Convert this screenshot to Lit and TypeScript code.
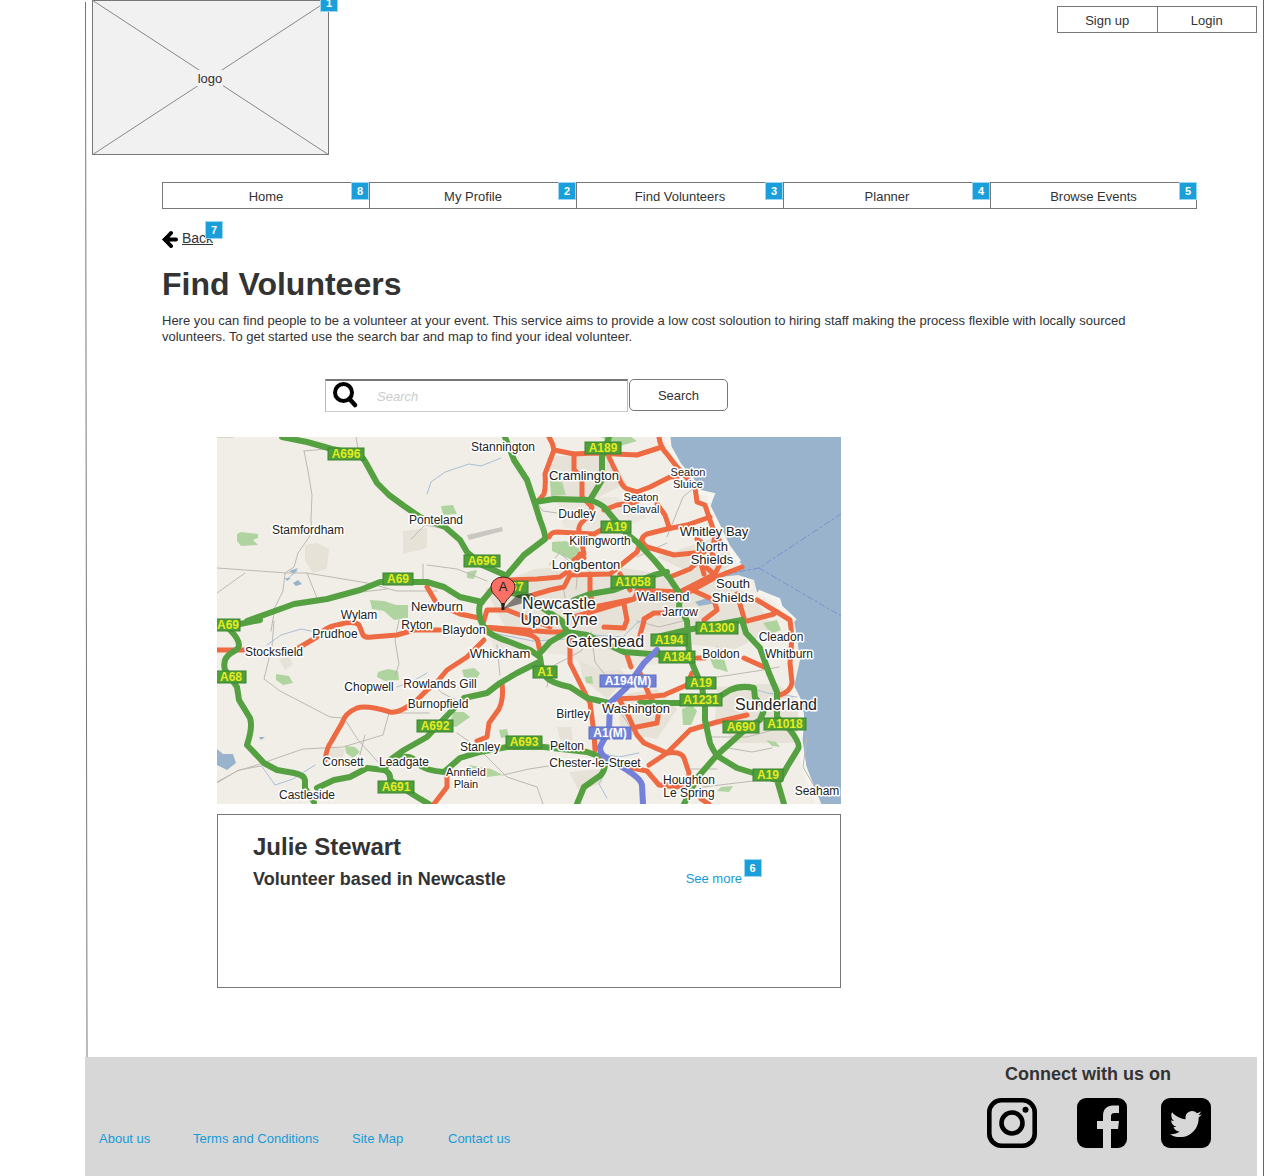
import { LitElement, html, svg, css } from "lit";
import { customElement, property } from "lit/decorators.js";

type Place = [name: string, x: number, y: number, size: "xs" | "s" | "m" | "l"];
type Shield = [code: string, x: number, y: number, width: number];

const LAND_PATCHES = [
  "M20 97l4-2 17 2v4l-5 2 5 5v0l-17 1-4-5z",
  "M153 163l14 1 12 4 12 0v13l-14 2-10-9-12-2z",
  "M59 237l13 2 4 7-10 2-7-5z",
  "M161 235l10-3 10 2 1 9-14 1-8-4z",
  "M128 309l10 1 5 5-7 6-7-5z",
  "M224 69l12-1 4 9-14 1z",
  "M333 44l12 1 4 13-15 1z",
  "M335 105l14-1 14 8-6 12-22-10z",
  "M384 0h30l6 4-20 6z",
  "M245 233l12-2 6 5-4 7-12-3z",
  "M237 275l10 0 6 5-14 10-8-2z",
  "M282 293l8-1 2 8-8 1z",
  "M252 328l22 4 12 6-16 2-16-5z",
  "M465 272l10-4 5 6-6 14-8 0z",
  "M493 222l14 0 4 13-14-4z",
  "M546 186l14-3 4 10-10 4z",
  "M549 303l10 2 4 5-8-1z",
  "M504 350l12-1-4 6-12-1z",
  "M368 240l7-1 1 8-7-1z",
  "M250 135l10-2-3 9-7-1z",
];

const BUILT_UP = [
  "M88 108l12-2 12 6-2 20-14 4-8-12z",
  "M186 94l24-3v20l-24 6z",
  "M114 310l14 2-4 16-14 2z",
  "M62 222l10-3 4 8-8 6z",
  "M268 152l50-20 60-6 60 10 60 0 40 26 20 30-40 20-60-6-90 8-70-4z",
  "M330 20l60-4 20 30-40 20-34-6z",
  "M440 120l60-20 20 24-30 20z",
  "M360 216l30 0 20 24-20 22-24-20z",
  "M400 258l40-6 20 20-20 30-36-6z",
  "M500 250l60-4 22 20-4 40-60 0-20-24z",
  "M352 335l30-3 4 14-24 8z",
  "M466 350l20-6 8 14-20 4z",
  "M340 290l14 0 2 14-12 2z",
];

const URBAN_LIGHT = [
  "M268 190l50 12 60 0 40-10 50 10-20 24-60 8-40-16-70-6z",
  "M340 60l60 0 30 20-40 18-44-8z",
];

const MINOR_ROADS = [
  "M139 0l2 12M87 14l22-2M87 14l4 20 4 24-1 24 1 14-14 20-4 14-9 6-2 18-8 16-4 24",
  "M0 131l70 5 20 0 60 10 30 8 40 0M0 156l28-20M90 136l10 25M120 158l50-6",
  "M0 0l16 0M57 184l-2 25-8 33 16 12 50 26 14 1 14 22 20 22M0 346l20-12 20-6 46-16 40-2 40-12 6-22 40 0M148 298l-5 20",
  "M210 128l30 4 30 12M228 92l-20-4-14 14M320 66l6 8 14 2M346 150l4 20",
  "M0 345l22-12 22-4M213 244l12 12 20 10M240 296l20 14 30 30 30 10 6 17M286 338l26-6 26-4",
  "M280 208l3 30M330 250l4-20 30-16 6-10M374 195l4 30 14 18M420 120l30-14M450 100l16-40 14-12",
  "M500 240l40-6 22-4M490 300l40 0 30-8 20 2M505 310l30 5 20-4M470 332l30 0M486 350l50-6M590 300l-4 30 14 24",
  "M400 270l20 30 20 14M420 184l22 6 24-6M500 210l20 10M345 118l16 14-2 20",
  "M332 128l12-14M182 183l-4 20 4 24-4 12M206 127l0 20",
];

const STREAMS = [
  "M50 208l14-10 20-6 20 4",
  "M276 196l40 8 34-2 26-4 30 2 14-14 20-10 30-4",
  "M70 142l10-8M180 250l16-6 14-8M382 316l20 4 20-4M388 335l-6 12 8 14M44 328l14 20 18-6 22-14",
  "M580 260l-30-4-20-6-16 4",
  "M210 57l4-12 14-10 24-8 12 2 20-8",
];

const RED_ROADS = [
  "M332 0Q336 6 337 13L328 37Q329 50 327 57L322 63",
  "M337 13l20 4 20-1 43 2M420 18l25-8",
  "M357 17v16l8 7v20l10 10-2 8Q360 88 362 93L367 117l-10 6",
  "M392 20l8 17Q405 50 410 52l10 3 13-5 20-10 7 0",
  "M387 73l13-5 20-3",
  "M332 100Q334 95 340 95l37 2 13-7 20-2",
  "M442 0Q443 10 450 17l10 13 18 20 2 15 8 3 5 15 5 14-3 20 8 10-5 10-35 18",
  "M493 80l-23 8-20 4-20 5Q420 102 430 110l27 8 30-3",
  "M440 67l8 11 4 12M480 102l14 10 8-8M500 100l8 12",
  "M425 102l-5 13-10 8-17 14-40 1",
  "M290 143l30-1 23-2 10-7 10-16 4 4",
  "M316 158l17-5 14-3 6-12",
  "M373 137v20l4 13M403 137l10 16",
  "M350 170l27 0 40-8 3-6M357 180l60-18M407 167l3 16-3 8-20-1",
  "M420 153l43 2 34-17M453 140l20-8 10-9 4 14M473 152l24 11 3 10-13 10",
  "M483 125l14 12M463 160l36-20 26-10",
  "M520 157l7 24M540 163l20 12 13 8 2 17-2 26 2 20Q573 255 563 258M557 177l-27 7",
  "M427 182l10-6 24 0M427 184l-4 14",
  "M0 213h27M78 213l22-13Q108 190 120 188Q137 183 142 188L146 198Q148 201 155 200L180 198l17-5 26 0",
  "M210 150l10 17 23 10 24 5M290 173l-20 0-5 17M290 173l23 9 20 8",
  "M267 190l36 6Q320 198 321 205l2 10M267 190l66 5 17 0",
  "M267 203l-17 17-20 13-10 12-10 8-10 10Q182 277 173 275Q150 268 140 271Q128 276 125 286L114 305Q110 310 108 323",
  "M285 246Q287 262 282 272L272 286l-2 14-10 4",
  "M353 196v30l10 20 10 20 4 30 1 17",
  "M230 336v14l-13 17",
  "M398 262l22-1 27-3 23-10 5-12M423 236l10 24 9 13-2 13-20 4",
  "M402 262l8 14 10 22 7 8 23 10 23-23 27-8 30-7",
  "M432 328l18-12Q464 314 467 321l5 15v14l-22-2M410 330l20 4 12 14 18 2M484 362l8 5",
  "M480 221l8 0M527 221l20 9M410 218l4 12",
];

const GREEN_ROADS = [
  "M65 0l25 5 25 7 25 5Q146 20 149 26L160 46l12 12 15 11 16 11 25 10 15 13 7 12 15 13 23 10",
  "M288 0l9 23 13 20 8 24 5 16Q329 98 328 102L307 118l-17 20-13 12-14 17Q260 180 268 192Q274 199 293 205l20 8 10 7Q325 236 329 240Q334 246 353 250l17 11 22 5",
  "M318 65l19-3 36 1Q382 66 387 70l10 12 13 15 10 8 17 18 16 19 10 15-1 13 8 14 2 32 3 10 10 24 3 20v13l5 23Q497 316 502 320L520 331l23 7 17 5 7 24",
  "M392 0l-7 20v23l-12 20",
  "M30 184l25-9 22-8 33-5 33-9 20-8 47 0 17 5 16 10 22 5M23 187l20-4",
  "M13 193Q22 202 22 208Q22 212 14 216Q5 222 8 233L20 250l2 13 11 18Q36 290 30 308L47 326l13 7 17 3Q87 338 88 343v8l9 14",
  "M100 351l17-8 16-3 17-9 17 2 6-10 14-10 23-13 13-14 24-25 23-5 13-10 17-10 20-10",
  "M167 333Q174 336 173 343L200 360l12 7",
  "M180 322Q194 316 200 326Q208 334 227 335L243 321l20-6 27-5h37l43 5 17 6Q390 330 384 338L367 350l-7 17",
  "M323 216l10-11 17-10 20 3 37 17 40 3 25 0M350 195l-5-11-25-17-10-7-30-8",
  "M357 163l16-6 24-4 40-15 13-3",
  "M440 200l30-7 55-10 4 13 14 15 9 25 8 19v25l13 13Q584 307 581 312L570 330l-7 13",
  "M423 266h40l37-5 13-8Q524 248 537 251l1 10 10 10-5 12-13 8-30 27-20 23-13 26",
];

const BLUE_ROADS = [
  "M440 213l-13 13-17 24-17 16-1 27-9 17Q383 318 390 321l20 12Q424 342 425 348l1 19",
];

const GREEN_SHIELDS: Shield[] = [
  ["A696", 129, 17, 36],
  ["A189", 386, 11, 36],
  ["A19", 399, 90, 30],
  ["A696", 265, 124, 36],
  ["A69", 181, 142, 30],
  ["67", 300, 150, 22],
  ["A1058", 416, 145, 44],
  ["A69", 11, 188, 24],
  ["A68", 14, 240, 30],
  ["A194", 452, 203, 36],
  ["A1300", 500, 191, 42],
  ["A184", 460, 220, 36],
  ["A19", 484, 246, 30],
  ["A1231", 484, 263, 42],
  ["A690", 524, 290, 36],
  ["A1018", 568, 287, 42],
  ["A692", 218, 289, 36],
  ["A693", 307, 305, 36],
  ["A691", 179, 350, 36],
  ["A1", 328, 235, 24],
  ["A19", 551, 338, 30],
];

const BLUE_SHIELDS: Shield[] = [
  ["A194(M)", 411, 244, 56],
  ["A1(M)", 393, 296, 42],
];

const PLACES: Place[] = [
  ["Stannington", 286, 10, "s"],
  ["Cramlington", 367, 39, "m"],
  ["Seaton", 471, 35, "xs"],
  ["Sluice", 471, 47, "xs"],
  ["Seaton", 424, 60, "xs"],
  ["Delaval", 424, 72, "xs"],
  ["Dudley", 360, 77, "s"],
  ["Ponteland", 219, 83, "s"],
  ["Stamfordham", 91, 93, "s"],
  ["Whitley Bay", 497, 95, "m"],
  ["Killingworth", 383, 104, "s"],
  ["North", 495, 110, "m"],
  ["Shields", 495, 123, "m"],
  ["Longbenton", 369, 128, "m"],
  ["South", 516, 147, "m"],
  ["Shields", 516, 161, "m"],
  ["Newburn", 220, 170, "m"],
  ["Wallsend", 446, 160, "m"],
  ["Newcastle", 342, 168, "l"],
  ["Upon Tyne", 342, 184, "l"],
  ["Jarrow", 463, 175, "s"],
  ["Wylam", 142, 178, "s"],
  ["Ryton", 200, 188, "s"],
  ["Prudhoe", 118, 197, "s"],
  ["Blaydon", 247, 193, "s"],
  ["Cleadon", 564, 200, "s"],
  ["Gateshead", 388, 206, "l"],
  ["Stocksfield", 57, 215, "s"],
  ["Whickham", 283, 217, "m"],
  ["Boldon", 504, 217, "s"],
  ["Whitburn", 572, 217, "s"],
  ["Chopwell", 152, 250, "s"],
  ["Rowlands Gill", 223, 247, "s"],
  ["Burnopfield", 221, 267, "s"],
  ["Sunderland", 559, 269, "l"],
  ["Birtley", 356, 277, "s"],
  ["Washington", 419, 272, "m"],
  ["Stanley", 263, 310, "s"],
  ["Pelton", 350, 309, "s"],
  ["Consett", 126, 325, "s"],
  ["Leadgate", 187, 325, "s"],
  ["Chester-le-Street", 378, 326, "s"],
  ["Annfield", 249, 335, "xs"],
  ["Plain", 249, 347, "xs"],
  ["Houghton", 472, 343, "s"],
  ["Le Spring", 472, 356, "s"],
  ["Castleside", 90, 358, "s"],
  ["Seaham", 600, 354, "s"],
];

@customElement("note-marker")
class NoteMarker extends LitElement {
  static styles = css`
    :host {
      display: block;
      box-sizing: border-box;
      width: 18px;
      height: 18px;
      border: 1px solid #9ad6f2;
      background: #1a9fdb;
      color: #fff;
      font: bold 11px/16px "Liberation Sans", Arial, sans-serif;
      text-align: center;
    }
  `;

  render() {
    return html`<slot></slot>`;
  }
}

@customElement("area-map")
class AreaMap extends LitElement {
  @property() label = "Map";

  static styles = css`
    :host {
      display: block;
    }
    .map {
      display: block;
      width: 100%;
      height: auto;
      font-family: "Liberation Sans", Arial, sans-serif;
    }
    .sea {
      fill: #99b3cc;
    }
    .shore {
      fill: none;
      stroke: #f6f4ee;
      stroke-width: 5;
    }
    .park {
      fill: #b0d4a0;
    }
    .urban {
      fill: #e7e2d8;
    }
    .light {
      fill: #ebe7df;
    }
    .road {
      fill: none;
      stroke-linejoin: round;
      stroke-linecap: round;
    }
    .minor {
      stroke: #bdb9b3;
      stroke-width: 1;
    }
    .stream {
      stroke: #a9c0d6;
      stroke-width: 1;
    }
    .ferry {
      stroke: #7d8fd0;
      stroke-width: 1;
      stroke-dasharray: 6 3 2 3;
    }
    .red {
      stroke: #ee6a42;
      stroke-width: 5;
    }
    .green {
      stroke: #55a142;
      stroke-width: 6;
    }
    .blue {
      stroke: #7580d8;
      stroke-width: 6;
    }
    .sign {
      stroke: #3c8430;
      fill: #4fa038;
    }
    .sign-blue {
      stroke: #5f6fc4;
      fill: #7282d8;
    }
    .code {
      font-size: 12px;
      font-weight: bold;
      fill: #e6ea20;
      text-anchor: middle;
    }
    .code-blue {
      fill: #fff;
    }
    .place {
      fill: #222;
      stroke: #fff;
      stroke-width: 3;
      stroke-linejoin: round;
      paint-order: stroke;
      text-anchor: middle;
    }
    .xs {
      font-size: 11px;
    }
    .s {
      font-size: 12px;
    }
    .m {
      font-size: 13px;
    }
    .l {
      font-size: 16px;
    }
  `;

  private roads(paths: string[], kind: string) {
    return paths.map((d) => svg`<path class="road ${kind}" d=${d}></path>`);
  }

  private shields(items: Shield[], sign: string, code: string) {
    return items.map(
      ([name, x, y, width]) => svg`
        <rect class=${sign} x=${x - width / 2} y=${y - 6} width=${width} height="12"></rect>
        <text class="code ${code}" x=${x} y=${y + 4}>${name}</text>`
    );
  }

  render() {
    return html`
      <svg class="map" viewBox="0 0 624 367" role="img" aria-label=${this.label}>
        <rect width="624" height="367" fill="#f1eee7"></rect>
        ${BUILT_UP.map((d) => svg`<path class="urban" d=${d}></path>`)}
        ${URBAN_LIGHT.map((d) => svg`<path class="light" d=${d}></path>`)}
        ${LAND_PATCHES.map((d) => svg`<path class="park" d=${d}></path>`)}
        <path
          class="sea"
          d="M452 0l1 10 10 18 12 14 8 13 13 3-2 5-2 6 8 16 12 25 11 15 2 4-18 5-4 6 18-2 16 5 3 12 20 8 2 7 15 14 3 16 3 23-6 27 8 16 2 17-2 20 4 27 10 26 6 14 10 17h11V0z"
        ></path>
        <path
          class="shore"
          d="M451 0l1 10 10 18 12 14 8 13 13 3-2 5-2 6 8 16 12 25 11 15M541 155l20 8 2 7 15 14M575 250l8 16 2 17-2 20 4 27 10 26 6 14 10 17"
        ></path>
        <path class="sea" d="M478 165l12-4 14 0-4 5-18 3z"></path>
        <path class="sea" d="M0 312l6 5 10 0 3 9-9 7-10-5z"></path>
        <path class="sea" d="M72 134l9-3-4 6zM76 146l5-3 4 4-6 2zM68 141l6 0-4 3zM42 300h6l-4 3z"></path>
        <path d="M250 98l35-8 1 4-34 9z" fill="#cac6c2"></path>
        ${this.roads(MINOR_ROADS, "minor")} ${this.roads(STREAMS, "stream")}
        <path class="road ferry" d="M624 77l-82 54-38 7M542 131l82 48"></path>
        ${this.roads(RED_ROADS, "red")} ${this.roads(GREEN_ROADS, "green")}
        ${this.roads(BLUE_ROADS, "blue")}
        ${this.shields(GREEN_SHIELDS, "sign", "")}
        ${this.shields(BLUE_SHIELDS, "sign-blue", "code-blue")}
        <path d="M286 172l14-14 14-2 4 4-12 6z" fill="#000" opacity=".45"></path>
        ${PLACES.map(
          ([name, x, y, size]) => svg`<text class="place ${size}" x=${x} y=${y + 4}>${name}</text>`
        )}
        <path
          d="M286 172c-1-11-12-13-12-22a12 10 0 0 1 24 0c0 9-11 11-12 22z"
          fill="#fb7064"
          stroke="#4a1c18"
          stroke-width="1"
        ></path>
        <path d="M286 166v7" stroke="#222" stroke-width="3"></path>
        <text x="286" y="154" font-size="13" text-anchor="middle" fill="#222">A</text>
      </svg>
    `;
  }
}

@customElement("app-root")
class AppRoot extends LitElement {
  static styles = css`
    :host {
      display: block;
      background: #fff;
      color: #333;
      font: 13px/16px "Liberation Sans", Arial, sans-serif;
    }
    * {
      box-sizing: border-box;
    }
    a {
      color: inherit;
      text-decoration: none;
    }
    h1,
    h2,
    h3,
    p,
    ul {
      margin: 0;
      padding: 0;
    }
    ul {
      list-style: none;
    }
    .page {
      display: flex;
      flex-direction: column;
      min-height: 100vh;
      margin-left: 85px;
      padding-right: 6px;
      border-right: 1px solid #666;
    }
    .body {
      position: relative;
      flex: 1;
      padding-bottom: 48px;
    }
    .edge {
      position: absolute;
      top: 0;
      left: 0;
      width: 3px;
      height: 100%;
    }
    .header {
      display: flex;
      justify-content: space-between;
      align-items: flex-start;
      padding-left: 7px;
    }
    .logo {
      position: relative;
      width: 237px;
    }
    .logo-art {
      display: block;
      width: 100%;
    }
    .logo-text {
      font-size: 13px;
      text-anchor: middle;
      fill: #333;
    }
    .logo-note {
      position: absolute;
      top: -6px;
      right: -9px;
    }
    .auth {
      display: flex;
      width: 200px;
      margin-top: 6px;
      border: 1px solid #777;
    }
    .auth-link {
      flex: 1;
      padding: 6px 0 3px;
      text-align: center;
    }
    .auth-link + .auth-link {
      border-left: 1px solid #777;
    }
    .content {
      padding: 27px 60px 0 77px;
    }
    .tabs {
      display: grid;
      grid-template-columns: repeat(5, 1fr);
    }
    .tab {
      position: relative;
    }
    .tab-link {
      display: block;
      padding: 6px 0 3px;
      border: 1px solid #777;
      border-right: 0;
      text-align: center;
    }
    .tab:last-child .tab-link {
      border-right: 1px solid #777;
    }
    .tab-note {
      position: absolute;
      top: 0;
      right: 0;
    }
    .back {
      position: relative;
      display: flex;
      gap: 4px;
      width: fit-content;
      height: 18px;
      margin-top: 21px;
      font-size: 14px;
    }
    .back-icon {
      width: 16px;
      height: 18px;
    }
    .back-text {
      text-decoration: underline;
    }
    .back-note {
      position: absolute;
      top: -9px;
      right: -10px;
    }
    .title {
      margin-top: 18px;
      font-size: 32px;
      line-height: 36px;
    }
    .intro {
      max-width: 1000px;
      margin-top: 11px;
    }
    .search {
      display: flex;
      align-items: flex-start;
      gap: 1px;
      max-width: 403px;
      margin: 34px 0 0 163px;
    }
    .field {
      display: flex;
      flex: 1;
      align-items: center;
      height: 33px;
      padding-left: 7px;
      border: 1px solid #bbb;
      border-top: 2px solid #777;
      border-bottom-color: #ccc;
    }
    .field-icon {
      width: 26px;
      height: 28px;
    }
    .input {
      flex: 1;
      min-width: 0;
      padding: 2px 0 0;
      margin-left: 18px;
      border: 0;
      outline: 0;
      background: none;
      color: inherit;
      font: inherit;
    }
    .input::placeholder {
      color: #ccc;
      font-style: italic;
      opacity: 1;
    }
    .submit {
      width: 99px;
      height: 32px;
      padding: 2px 0 0;
      border: 1px solid #777;
      border-radius: 5px;
      background: #fff;
      color: inherit;
      font: inherit;
    }
    .results {
      display: grid;
      gap: 10px;
      max-width: 624px;
      margin: 25px 0 0 55px;
    }
    .card {
      display: flex;
      justify-content: space-between;
      align-items: flex-start;
      min-height: 174px;
      padding: 18px 98px 18px 35px;
      border: 1px solid #777;
    }
    .name {
      font-size: 24px;
      line-height: 28px;
    }
    .about {
      margin-top: 8px;
      font-size: 18px;
      line-height: 20px;
    }
    .more {
      position: relative;
      margin-top: 38px;
      color: #169bd7;
    }
    .more-note {
      position: absolute;
      top: -12px;
      left: 58px;
    }
    .footer {
      display: flex;
      justify-content: space-between;
      min-height: 119px;
      padding: 6px 46px 28px 14px;
      background: #d7d7d7;
    }
    .links {
      display: grid;
      grid-template-columns: 94px 159px 96px auto;
      align-self: end;
      padding-bottom: 1px;
      color: #169bd7;
    }
    .social-title {
      padding-left: 18px;
      font-size: 18px;
      line-height: 22px;
    }
    .social-list {
      display: grid;
      grid-template-columns: 90px 84px 50px;
      margin-top: 13px;
    }
    .social-link,
    .social-icon {
      display: block;
      width: 50px;
      height: 50px;
    }
    .cut {
      fill: #d7d7d7;
    }
  `;

  private tabs = [
    { name: "Home", note: 8 },
    { name: "My Profile", note: 2 },
    { name: "Find Volunteers", note: 3 },
    { name: "Planner", note: 4 },
    { name: "Browse Events", note: 5 },
  ];

  private links = ["About us", "Terms and Conditions", "Site Map", "Contact us"];

  render() {
    return html`
      <div class="page">
        <div class="body">
          <svg class="edge" viewBox="0 0 3 1057" preserveAspectRatio="none" aria-hidden="true">
            <path d="M.5 2L2 1057" stroke="#777" stroke-width="1"></path>
          </svg>
          <header class="header">
            <div class="logo">
              <svg class="logo-art" viewBox="0 0 237 155">
                <rect x=".5" y=".5" width="236" height="154" fill="#f1f1f1" stroke="#777"></rect>
                <path d="M0 0l237 155M237 0L0 155" stroke="#888"></path>
                <rect x="105" y="70" width="26" height="16" fill="#f1f1f1"></rect>
                <text class="logo-text" x="118" y="83">logo</text>
              </svg>
              <note-marker class="logo-note">1</note-marker>
            </div>
            <div class="auth">
              <a class="auth-link" href="#signup">Sign up</a>
              <a class="auth-link" href="#login">Login</a>
            </div>
          </header>
          <main class="content">
            <nav>
              <ul class="tabs">
                ${this.tabs.map(
                  (tab) => html`<li class="tab">
                    <a class="tab-link" href="#">${tab.name}</a>
                    <note-marker class="tab-note">${tab.note}</note-marker>
                  </li>`
                )}
              </ul>
            </nav>
            <a class="back" href="#back">
              <svg class="back-icon" viewBox="0 0 16 18" aria-hidden="true">
                <path
                  d="M9 3L3 9.500l6 6.500M3 9.500h11"
                  fill="none"
                  stroke="#000"
                  stroke-width="4"
                  stroke-linecap="round"
                ></path>
                <path d="M0 9.500L6 4v11z"></path>
              </svg>
              <span class="back-text">Back</span>
              <note-marker class="back-note">7</note-marker>
            </a>
            <h1 class="title">Find Volunteers</h1>
            <p class="intro">
              Here you can find people to be a volunteer at your event. This service aims to provide
              a low cost soloution to hiring staff making the process flexible with locally sourced
              volunteers. To get started use the search bar and map to find your ideal volunteer.
            </p>
            <form class="search" @submit=${(e: Event) => e.preventDefault()}>
              <label class="field">
                <svg class="field-icon" viewBox="0 0 26 28" aria-hidden="true">
                  <circle cx="10.500" cy="10.500" r="8.500" fill="none" stroke="#000" stroke-width="4"></circle>
                  <path d="M16.500 17l5.500 6" stroke="#000" stroke-width="4.500" stroke-linecap="round"></path>
                </svg>
                <input class="input" type="text" placeholder="Search" aria-label="Search" />
              </label>
              <button class="submit" type="submit">Search</button>
            </form>
            <div class="results">
              <area-map label="Newcastle Upon Tyne"></area-map>
              <section class="card">
                <div>
                  <h2 class="name">Julie Stewart</h2>
                  <h3 class="about">Volunteer based in Newcastle</h3>
                </div>
                <a class="more" href="#more"
                  >See more<note-marker class="more-note">6</note-marker></a
                >
              </section>
            </div>
          </main>
        </div>
        <footer class="footer">
          <div class="links">
            ${this.links.map((name) => html`<a href="#">${name}</a>`)}
          </div>
          <div>
            <h2 class="social-title">Connect with us on</h2>
            <div class="social-list">
              <a class="social-link" href="#instagram" aria-label="Instagram">
                <svg class="social-icon" viewBox="0 0 50 50">
                  <rect x="2.300" y="2.300" width="45.400" height="45.400" rx="12" fill="none" stroke="#000" stroke-width="4.600"></rect>
                  <circle cx="25" cy="25" r="10.500" fill="none" stroke="#000" stroke-width="4.600"></circle>
                  <circle cx="38.500" cy="11.700" r="3"></circle>
                </svg>
              </a>
              <a class="social-link" href="#facebook" aria-label="Facebook">
                <svg class="social-icon" viewBox="0 0 50 50">
                  <rect width="50" height="50" rx="9"></rect>
                  <path
                    class="cut"
                    d="M26 50V31h-6v-8h6v-5c0-7 4-10.500 10-10.500h6V15h-4c-3 0-4 1-4 3.500V23h8l-1 8h-7v19z"
                  ></path>
                </svg>
              </a>
              <a class="social-link" href="#twitter" aria-label="Twitter">
                <svg class="social-icon" viewBox="0 0 50 50">
                  <rect width="50" height="50" rx="9"></rect>
                  <path
                    class="cut"
                    transform="translate(2.500 .5) scale(.1)"
                    d="M351.100 190.800c.2 2.800.2 5.700.2 8.500 0 86.700-66 186.600-186.600 186.600-37.200 0-71.700-10.800-100.700-29.400 5.300.6 10.400.8 15.800.8 30.700 0 58.900-10.400 81.400-28-28.800-.6-53-19.500-61.300-45.500 10.100 1.500 19.200 1.500 29.600-1.200-30-6.100-52.500-32.500-52.500-64.400v-.8c8.700 4.900 18.900 7.900 29.600 8.300a65.447 65.447 0 0 1-29.200-54.600c0-12.200 3.200-23.400 8.900-33.100 32.300 39.800 80.800 65.800 135.200 68.600-9.300-44.500 24-80.600 64-80.600 18.900 0 35.900 7.900 47.900 20.700 14.800-2.800 29-8.300 41.600-15.800-4.900 15.200-15.200 28-28.800 36.100 13.200-1.400 26-5.100 37.800-10.200-8.900 13.100-20.100 24.700-32.900 34z"
                  ></path>
                </svg>
              </a>
            </div>
          </div>
        </footer>
      </div>
    `;
  }
}
